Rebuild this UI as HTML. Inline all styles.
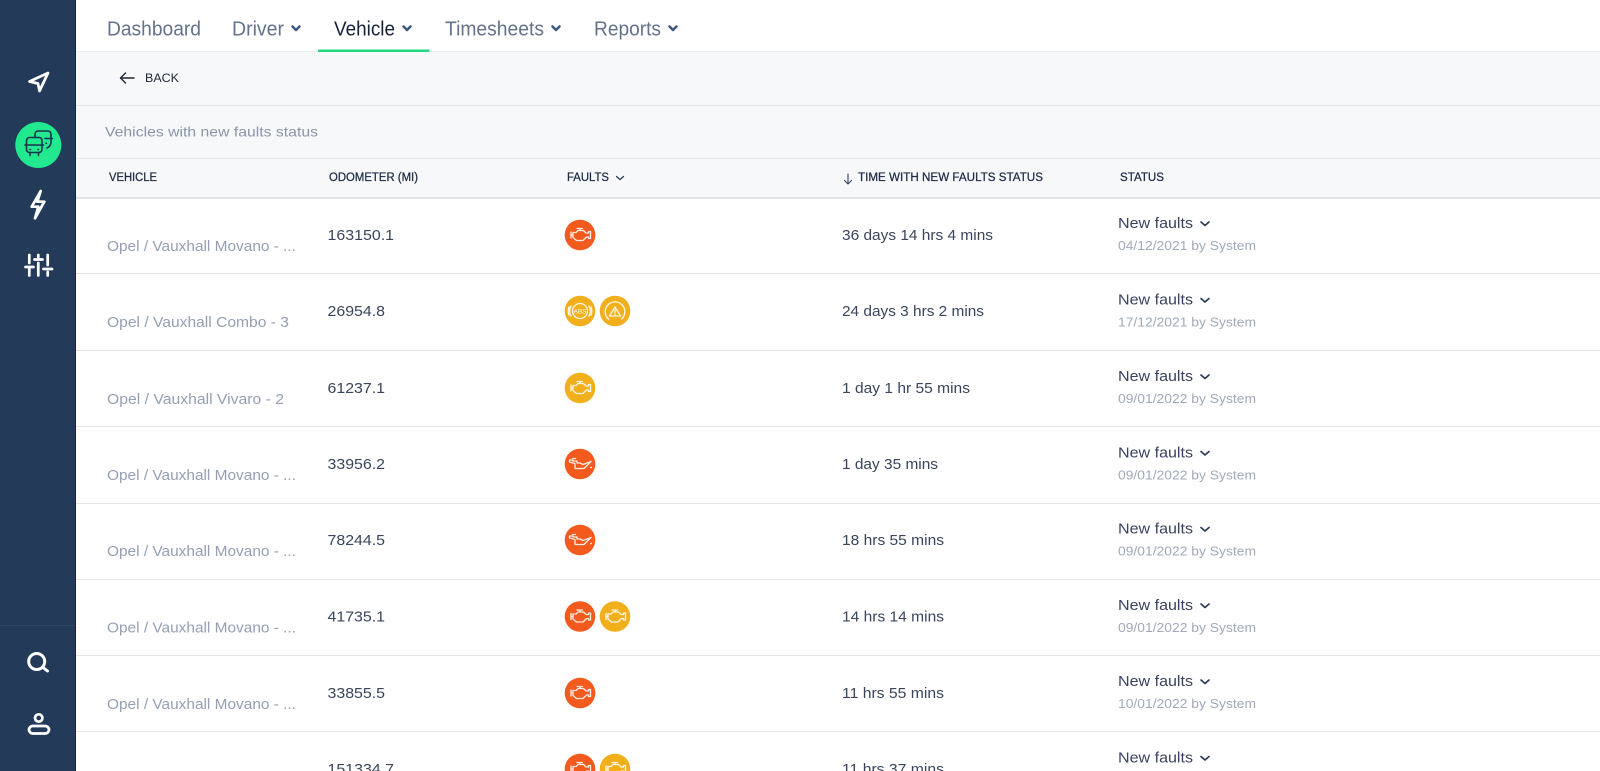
<!DOCTYPE html>
<html lang="en">
<head>
<meta charset="utf-8">
<title>Vehicles with new faults status</title>
<style>
html,body{margin:0;padding:0;width:1600px;height:771px;overflow:hidden;background:#fff}
svg{display:block}
text{font-family:"Liberation Sans",sans-serif}
.nav{font-size:20px;fill:#64728b}
.act{font-size:20px;fill:#16213a}
.th{font-size:11.5px;fill:#1c2b45;stroke:#1c2b45;stroke-width:.25}
.name{font-size:15px;fill:#949fb3}
.val{font-size:15px;fill:#39455c}
.st{font-size:15px;fill:#39435f}
.sub{font-size:13px;fill:#a0a9ba}
.chev{fill:none;stroke:#2b3a57;stroke-width:1.7;stroke-linecap:round;stroke-linejoin:round}
.navchev{fill:none;stroke:#3f5a80;stroke-width:2.6;stroke-linecap:round;stroke-linejoin:round}
.ic{fill:none;stroke:#fff;stroke-width:2.7;stroke-linecap:round;stroke-linejoin:round}
.bus{fill:none;stroke:#17324f;stroke-width:1.6;stroke-linecap:round;stroke-linejoin:round}
.f{fill:none;stroke:#fff;stroke-width:1.35;stroke-linejoin:round;stroke-linecap:round;opacity:.88}
.line{fill:#e3e5ec}
</style>
</head>
<body>
<svg width="1600" height="771" viewBox="0 0 1600 771" xmlns="http://www.w3.org/2000/svg">
<defs>
<g id="eng"><circle r="15.3"/><path class="f" d="M-9-3V3M-9 0H-7M-7-2.500H-4L-2-4.500H3.500L6-2H8.500V-3.500H10.500V3.500H8.500V2H6.500L3 5.500H-3.500L-7 2.500ZM-3-6.500H2.500M0-6.500V-4.500"/></g>
<g id="oil"><circle r="15.3"/><path class="f" d="M-10.500-4H-7V-3H-3V-1H0L3 .5L11-2.500L4 4.500H-5V-.5L-10.500-2ZM-7.500-5.500H-4.500"/><circle cx="11" cy="3.500" r=".9" fill="#fff"/></g>
<path id="c" class="chev" d="M-4-1.500L0 2L4-1.500"/>
<path id="nc" class="navchev" d="M-3.500-1.500L0 2L3.500-1.500"/>
</defs>

<rect width="1600" height="771" fill="#fff"/>

<!-- top bar -->
<rect x="76" y="52" width="1524" height="54" fill="#f7f8fa"/>
<rect x="76" y="51" width="1524" height="1" fill="#eceef2"/>
<rect x="76" y="105" width="1524" height="1" fill="#e3e5ea"/>
<text class="nav" x="107" y="35.500" textLength="94" lengthAdjust="spacingAndGlyphs">Dashboard</text>
<text class="nav" x="232" y="35.500" textLength="52" lengthAdjust="spacingAndGlyphs">Driver</text>
<use href="#nc" x="296" y="28"/>
<text class="act" x="334" y="35.500" textLength="61" lengthAdjust="spacingAndGlyphs">Vehicle</text>
<use href="#nc" x="407" y="28" style="stroke:#16213a"/>
<rect x="318" y="49.500" width="111.500" height="2.500" fill="#23d97f"/>
<text class="nav" x="445" y="35.500" textLength="99" lengthAdjust="spacingAndGlyphs">Timesheets</text>
<use href="#nc" x="556" y="28"/>
<text class="nav" x="594" y="35.500" textLength="67" lengthAdjust="spacingAndGlyphs">Reports</text>
<use href="#nc" x="673" y="28"/>

<!-- back -->
<path d="M134 78H120.500M125.500 73L120.500 78L125.500 83" fill="none" stroke="#1d2536" stroke-width="1.400" stroke-linecap="round" stroke-linejoin="round"/>
<text x="145" y="82" font-size="11.500" fill="#1d2536" textLength="34" lengthAdjust="spacingAndGlyphs">BACK</text>

<!-- title + header -->
<rect x="76" y="106" width="1524" height="92" fill="#f7f8fa"/>
<text x="105" y="136.500" font-size="14" fill="#8b95a8" textLength="213" lengthAdjust="spacingAndGlyphs">Vehicles with new faults status</text>
<rect x="76" y="158" width="1524" height="1" fill="#e6e8ee"/>
<rect x="76" y="197" width="1524" height="2" fill="#e0e3ea"/>
<text class="th" x="109" y="181" textLength="48" lengthAdjust="spacingAndGlyphs">VEHICLE</text>
<text class="th" x="329" y="181" textLength="89" lengthAdjust="spacingAndGlyphs">ODOMETER (MI)</text>
<text class="th" x="567" y="181" textLength="42" lengthAdjust="spacingAndGlyphs">FAULTS</text>
<path class="chev" d="M616.500 176.500L620 179.500L623.500 176.500" style="stroke-width:1.300"/>
<path d="M848 174V184M844.500 180.500L848 184L851.500 180.500" fill="none" stroke="#33435f" stroke-width="1.100" stroke-linecap="round" stroke-linejoin="round"/>
<text class="th" x="858" y="181" textLength="185" lengthAdjust="spacingAndGlyphs">TIME WITH NEW FAULTS STATUS</text>
<text class="th" x="1120" y="181" textLength="44" lengthAdjust="spacingAndGlyphs">STATUS</text>

<!-- row lines -->
<rect class="line" x="76" y="273" width="1524" height="1"/>
<rect class="line" x="76" y="350" width="1524" height="1"/>
<rect class="line" x="76" y="426" width="1524" height="1"/>
<rect class="line" x="76" y="503" width="1524" height="1"/>
<rect class="line" x="76" y="579" width="1524" height="1"/>
<rect class="line" x="76" y="655" width="1524" height="1"/>
<rect class="line" x="76" y="731" width="1524" height="1"/>

<!-- row 1 -->
<text class="name" x="107" y="251" textLength="189" lengthAdjust="spacingAndGlyphs">Opel / Vauxhall Movano - ...</text>
<text class="val" x="327.500" y="240" textLength="66.500" lengthAdjust="spacingAndGlyphs">163150.1</text>
<use href="#eng" x="580" y="235" fill="#f25a1e"/>
<text class="val" x="842" y="240" textLength="151" lengthAdjust="spacingAndGlyphs">36 days 14 hrs 4 mins</text>
<text class="st" x="1118" y="228" textLength="75" lengthAdjust="spacingAndGlyphs">New faults</text>
<use href="#c" x="1205" y="223.500"/>
<text class="sub" x="1118" y="250" textLength="138" lengthAdjust="spacingAndGlyphs">04/12/2021 by System</text>

<!-- row 2 -->
<text class="name" x="107" y="327" textLength="182" lengthAdjust="spacingAndGlyphs">Opel / Vauxhall Combo - 3</text>
<text class="val" x="327.500" y="316" textLength="57.500" lengthAdjust="spacingAndGlyphs">26954.8</text>
<circle cx="580" cy="311" r="15.300" fill="#f2af1c"/>
<g class="f" transform="translate(580 311)">
  <circle r="7.500"/>
  <path d="M-9-5A10.500 10.500 0 0 0-9 5M9-5A10.500 10.500 0 0 1 9 5"/>
  <path d="M-11-4A12 12 0 0 0-11 4M11-4A12 12 0 0 1 11 4"/>
</g>
<text x="580" y="313.500" font-size="6.500" fill="#fff" text-anchor="middle">ABS</text>
<circle cx="615" cy="311" r="15.300" fill="#f2af1c"/>
<g class="f" transform="translate(615 311)">
  <path d="M-6.500 8A9.800 9.800 0 1 1 6.500 8M-6.500 8L-8 7"/>
  <path d="M0-4L5.500 5H-5.500Z"/>
  <path d="M0-1V2M0 3.400V3.500"/>
</g>
<text class="val" x="842" y="316" textLength="142" lengthAdjust="spacingAndGlyphs">24 days 3 hrs 2 mins</text>
<text class="st" x="1118" y="304.500" textLength="75" lengthAdjust="spacingAndGlyphs">New faults</text>
<use href="#c" x="1205" y="300"/>
<text class="sub" x="1118" y="326.500" textLength="138" lengthAdjust="spacingAndGlyphs">17/12/2021 by System</text>

<!-- row 3 -->
<text class="name" x="107" y="404" textLength="177" lengthAdjust="spacingAndGlyphs">Opel / Vauxhall Vivaro - 2</text>
<text class="val" x="327.500" y="393" textLength="57.500" lengthAdjust="spacingAndGlyphs">61237.1</text>
<use href="#eng" x="580" y="388" fill="#f2af1c"/>
<text class="val" x="842" y="393" textLength="128" lengthAdjust="spacingAndGlyphs">1 day 1 hr 55 mins</text>
<text class="st" x="1118" y="381" textLength="75" lengthAdjust="spacingAndGlyphs">New faults</text>
<use href="#c" x="1205" y="376.500"/>
<text class="sub" x="1118" y="403" textLength="138" lengthAdjust="spacingAndGlyphs">09/01/2022 by System</text>

<!-- row 4 -->
<text class="name" x="107" y="480" textLength="189" lengthAdjust="spacingAndGlyphs">Opel / Vauxhall Movano - ...</text>
<text class="val" x="327.500" y="469" textLength="57.500" lengthAdjust="spacingAndGlyphs">33956.2</text>
<use href="#oil" x="580" y="464" fill="#f25a1e"/>
<text class="val" x="842" y="469" textLength="96" lengthAdjust="spacingAndGlyphs">1 day 35 mins</text>
<text class="st" x="1118" y="457.500" textLength="75" lengthAdjust="spacingAndGlyphs">New faults</text>
<use href="#c" x="1205" y="453"/>
<text class="sub" x="1118" y="479.500" textLength="138" lengthAdjust="spacingAndGlyphs">09/01/2022 by System</text>

<!-- row 5 -->
<text class="name" x="107" y="556" textLength="189" lengthAdjust="spacingAndGlyphs">Opel / Vauxhall Movano - ...</text>
<text class="val" x="327.500" y="545" textLength="57.500" lengthAdjust="spacingAndGlyphs">78244.5</text>
<use href="#oil" x="580" y="540" fill="#f25a1e"/>
<text class="val" x="842" y="545" textLength="102" lengthAdjust="spacingAndGlyphs">18 hrs 55 mins</text>
<text class="st" x="1118" y="533.500" textLength="75" lengthAdjust="spacingAndGlyphs">New faults</text>
<use href="#c" x="1205" y="529"/>
<text class="sub" x="1118" y="555.500" textLength="138" lengthAdjust="spacingAndGlyphs">09/01/2022 by System</text>

<!-- row 6 -->
<text class="name" x="107" y="632.500" textLength="189" lengthAdjust="spacingAndGlyphs">Opel / Vauxhall Movano - ...</text>
<text class="val" x="327.500" y="621.500" textLength="57.500" lengthAdjust="spacingAndGlyphs">41735.1</text>
<use href="#eng" x="580" y="616.500" fill="#f25a1e"/>
<use href="#eng" x="615" y="616.500" fill="#f2af1c"/>
<text class="val" x="842" y="621.500" textLength="102" lengthAdjust="spacingAndGlyphs">14 hrs 14 mins</text>
<text class="st" x="1118" y="610" textLength="75" lengthAdjust="spacingAndGlyphs">New faults</text>
<use href="#c" x="1205" y="605.500"/>
<text class="sub" x="1118" y="632" textLength="138" lengthAdjust="spacingAndGlyphs">09/01/2022 by System</text>

<!-- row 7 -->
<text class="name" x="107" y="709" textLength="189" lengthAdjust="spacingAndGlyphs">Opel / Vauxhall Movano - ...</text>
<text class="val" x="327.500" y="698" textLength="57.500" lengthAdjust="spacingAndGlyphs">33855.5</text>
<use href="#eng" x="580" y="693" fill="#f25a1e"/>
<text class="val" x="842" y="698" textLength="102" lengthAdjust="spacingAndGlyphs">11 hrs 55 mins</text>
<text class="st" x="1118" y="686" textLength="75" lengthAdjust="spacingAndGlyphs">New faults</text>
<use href="#c" x="1205" y="681.500"/>
<text class="sub" x="1118" y="708" textLength="138" lengthAdjust="spacingAndGlyphs">10/01/2022 by System</text>

<!-- row 8 (cut off) -->
<text class="val" x="327.500" y="774" textLength="66.500" lengthAdjust="spacingAndGlyphs">151334.7</text>
<use href="#eng" x="580" y="769" fill="#f25a1e"/>
<use href="#eng" x="615" y="769" fill="#f2af1c"/>
<text class="val" x="842" y="774" textLength="102" lengthAdjust="spacingAndGlyphs">11 hrs 37 mins</text>
<text class="st" x="1118" y="762.500" textLength="75" lengthAdjust="spacingAndGlyphs">New faults</text>
<use href="#c" x="1205" y="758"/>

<!-- sidebar -->
<rect width="75" height="771" fill="#233a59"/>
<rect x="75" width="1" height="771" fill="#15204a"/>
<rect y="625" width="75" height="1" fill="#2f4566"/>
<path class="ic" d="M48 73L29.500 81.500L38 83.500L39.500 91Z"/>
<circle cx="38.300" cy="145" r="23" fill="#22e88f"/>
<g class="bus">
  <rect x="26.500" y="137.500" width="15.500" height="15" rx="3"/>
  <path d="M25 145H43.500M30 152.500V155.500M38.500 152.500V155.500M30 149.500H30.500M38 149.500H38.500"/>
  <path d="M35 137V134.500Q35 131 38.500 131H47.500Q51 131 51 134.500V142Q51 146 47 148"/>
  <path d="M45 138.500H52.500M46 143.300H46.500"/>
</g>
<path class="ic" d="M40.700 191L31.700 206.700H38.300L35 218.300L44.300 201.700H37.300Z" stroke-width="2.300"/>
<g class="ic">
  <path d="M29.300 255V263M29.300 269V275.500M38.300 255V257M38.300 263V275.500M47.700 255V265M47.700 272V275.500"/>
  <path d="M25.500 267H33.500M34.500 259.500H42.500M43.500 269H52"/>
</g>
<circle class="ic" cx="36.700" cy="661.500" r="8" style="stroke-width:3"/>
<path class="ic" d="M43 667.500L47.500 671" style="stroke-width:3"/>
<circle class="ic" cx="38.700" cy="718" r="3.700"/>
<rect class="ic" x="29" y="726" width="20" height="7.500" rx="3.750" style="stroke-width:2.800"/>
</svg>
</body>
</html>
